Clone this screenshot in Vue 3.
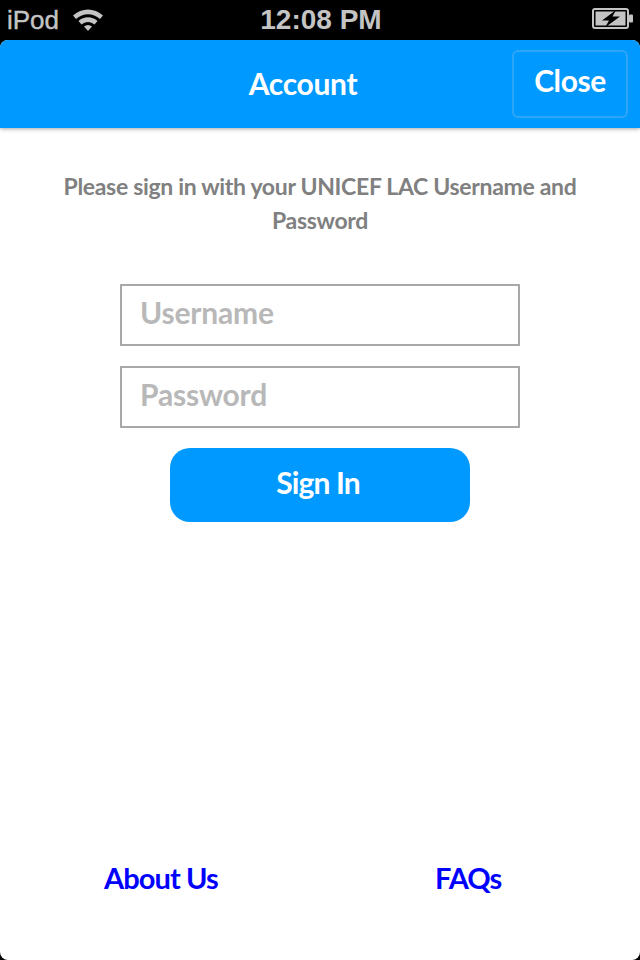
<script setup>
const username = ''
const password = ''
</script>

<template>
  <div class="screen">
    <div class="status-bar">
      <div class="status-left">
        <span class="carrier">iPod</span>
        <svg class="wifi" width="32" height="24" viewBox="0 0 32 24">
          <path d="M1 8.500C9.500 0.500 22.500 0.500 31 8.500L28 12C21 5.500 11 5.500 4 12Z" fill="#c4c4c4" />
          <path d="M6.500 14C12 9 20 9 25.500 14L22.500 17.500C18.500 14 13.500 14 9.500 17.500Z" fill="#c4c4c4" />
          <path d="M12 19.500C14.500 17.500 17.500 17.500 20 19.500L16 24Z" fill="#c4c4c4" />
        </svg>
      </div>
      <span class="clock">12:08 PM</span>
      <svg class="battery" width="42" height="22" viewBox="0 0 42 22">
        <rect x="1" y="1" width="35" height="19" rx="2" fill="none" stroke="#c4c4c4" stroke-width="2" />
        <rect x="3.500" y="3.500" width="30" height="14" fill="#c4c4c4" />
        <rect x="37" y="6.500" width="4" height="8" rx="1" fill="#c4c4c4" />
        <path d="M24 2L10 12.500H17L13 19.500L28 8.500H20.500Z" fill="#000" />
      </svg>
    </div>

    <div class="page">
      <header class="nav">
        <h1 class="nav-title">Account</h1>
        <button class="close-btn" type="button">Close</button>
      </header>

      <main class="content">
        <p class="intro">Please sign in with your UNICEF LAC Username and Password</p>
        <form class="login" @submit.prevent>
          <input class="field" type="text" placeholder="Username" :value="username" />
          <input class="field" type="password" placeholder="Password" :value="password" />
          <button class="sign-in" type="submit">Sign In</button>
        </form>
      </main>

      <footer class="links">
        <a class="link link-about" href="#">About Us</a>
        <a class="link link-faq" href="#">FAQs</a>
      </footer>
    </div>
  </div>
</template>

<style>
html,
body {
  margin: 0;
  background: #000;
}
</style>

<style scoped>
.screen {
  display: flex;
  flex-direction: column;
  width: 640px;
  height: 960px;
  overflow: hidden;
  background: #000;
  font-family: Lato, "Open Sans", sans-serif;
}

/* status bar */
.status-bar {
  position: relative;
  flex: none;
  display: flex;
  align-items: center;
  justify-content: space-between;
  height: 40px;
  padding: 0 6px 0 7px;
  box-sizing: border-box;
  color: #c4c4c4;
  font-family: "Liberation Sans", Arial, sans-serif;
  font-weight: 700;
}
.status-left {
  display: flex;
  align-items: center;
  gap: 13px;
}
.carrier {
  font-size: 26px;
  font-weight: 400;
  -webkit-text-stroke: 0.4px #c4c4c4;
  line-height: 38px;
}
.wifi {
  display: block;
  margin-top: -2px;
}
.clock {
  position: absolute;
  left: 2px;
  right: 0;
  text-align: center;
  font-size: 28px;
  line-height: 38px;
}
.battery {
  display: block;
  margin-top: -2px;
}

/* page sheet */
.page {
  flex: 1;
  display: flex;
  flex-direction: column;
  min-height: 0;
  background: #fff;
  border-radius: 8px;
  overflow: hidden;
}
.nav {
  position: relative;
  flex: none;
  display: flex;
  align-items: center;
  justify-content: center;
  height: 88px;
  background: #0099ff;
  box-shadow: 0 1px 4px rgba(0, 0, 0, 0.35);
}
.nav-title {
  margin: -2px 34px 0 0;
  font-size: 30px;
  font-weight: 700;
  line-height: 88px;
  letter-spacing: -0.3px;
  color: #fff;
}
.close-btn {
  position: absolute;
  top: 10px;
  right: 12px;
  width: 116px;
  height: 68px;
  padding: 0 0 8px;
  box-sizing: border-box;
  border: 2px solid #2ea6f7;
  border-radius: 6px;
  background: #0099ff;
  color: #fff;
  font-family: inherit;
  font-size: 30px;
  font-weight: 700;
  letter-spacing: -0.4px;
}

.content {
  flex: 1;
  display: flex;
  flex-direction: column;
  align-items: center;
  min-height: 0;
}
.intro {
  width: 540px;
  margin: 41px 0 0;
  font-size: 23px;
  font-weight: 700;
  line-height: 34px;
  letter-spacing: -0.32px;
  color: #808080;
  text-align: center;
}
.login {
  display: flex;
  flex-direction: column;
  align-items: center;
  gap: 20px;
  margin-top: 47px;
}
.field {
  display: block;
  width: 400px;
  height: 62px;
  padding: 0 18px 7px;
  box-sizing: border-box;
  border: 2px solid #a8a8a8;
  border-radius: 0;
  outline: none;
  background: #fff;
  font-family: inherit;
  font-size: 30px;
  font-weight: 700;
  letter-spacing: -0.2px;
}
.field::placeholder {
  color: #b8b8b8;
  opacity: 1;
}
.sign-in {
  width: 300px;
  height: 74px;
  padding: 0 4px 6px 0;
  border: none;
  border-radius: 20px;
  background: #0099ff;
  color: #fff;
  font-family: inherit;
  font-size: 30px;
  font-weight: 700;
  letter-spacing: -0.9px;
}

.links {
  flex: none;
  display: flex;
  height: 100px;
}
.link {
  font-size: 29px;
  font-weight: 700;
  line-height: 36px;
  color: #0000ff;
  text-decoration: none;
  letter-spacing: -0.9px;
}
.link-about {
  margin-left: 104px;
}
.link-faq {
  margin-left: 217px;
}
</style>
